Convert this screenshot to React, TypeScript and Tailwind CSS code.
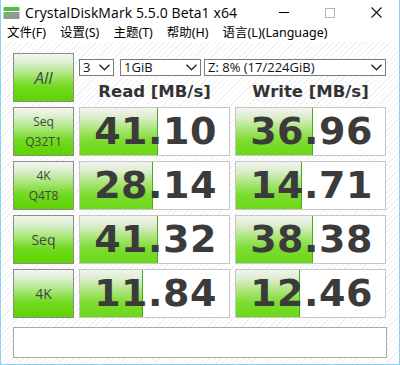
import React from "react";

const rows = [
  { label: ["Seq", "Q32T1"], read: "41.10", write: "36.96" },
  { label: ["4K", "Q4T8"], read: "28.14", write: "14.71" },
  { label: ["Seq"], read: "41.32", write: "38.38" },
  { label: ["4K"], read: "11.84", write: "12.46" },
];

function barWidth(v: string) {
  const n = parseFloat(v);
  return Math.round(63 + 27.8 * Math.log10(n / 11.84));
}

function LabelBtn({ children }: { children: React.ReactNode }) {
  return (
    <div className="h-full border border-[#8c8c8c] bg-[linear-gradient(180deg,#f4f7f2_0%,#dcefcf_18%,#a6e674_45%,#72da22_68%,#5cd400_100%)] flex flex-col items-center justify-center text-[#444] leading-[20px] text-[12px] [font-family:'Open_Sans','DejaVu_Sans',sans-serif]">
      {children}
    </div>
  );
}

function ValueBox({ v }: { v: string }) {
  return (
    <div className="relative h-full border border-[#c6c6c6] bg-white overflow-hidden">
      <div
        className="absolute left-0 top-0 bottom-0 border-r border-[#4aa81a] bg-[linear-gradient(180deg,#f2f4f0_0%,#dcedcc_20%,#a4e46e_48%,#7cdc30_70%,#6cd818_100%)]"
        style={{ width: barWidth(v) }}
      />
      <div className="relative h-full flex items-center justify-center pl-[2px] text-[38px] font-bold text-[#3b3b3b] [font-family:'DejaVu_Sans',sans-serif] tracking-[0.5px]">
        {v}
      </div>
    </div>
  );
}

function Chevron() {
  return (
    <svg width="11" height="7" viewBox="0 0 11 7" className="shrink-0">
      <path d="M0.5 0.8 L5.5 5.8 L10.5 0.8" fill="none" stroke="#222" strokeWidth="1.3" />
    </svg>
  );
}

function Select({ text, w }: { text: string; w: string }) {
  return (
    <div className={`${w} h-[17px] border border-[#7a7a7a] bg-white flex items-center justify-between pl-[3px] pr-[3px] text-[13px] text-[#111] [font-family:'Open_Sans','DejaVu_Sans',sans-serif]`}>
      <span className="leading-none">{text}</span>
      <Chevron />
    </div>
  );
}

export default function App() {
  return (
    <div className="w-[400px] h-[365px] flex flex-col border-x border-b border-[#86d6ea] bg-white overflow-hidden">
      {/* title bar */}
      <div className="h-[25px] flex items-center shrink-0">
        <svg width="17" height="12" viewBox="0 0 17 12" className="ml-[2px] mt-[1px]">
          <rect x="0.5" y="0" width="16" height="4" rx="1" fill="#4cc23a" />
          <rect x="0.5" y="5" width="16" height="7" fill="#8e9a96" />
          <rect x="2" y="7" width="4" height="2" fill="#5bd14a" />
        </svg>
        <span className="ml-[5px] text-[14px] text-black [font-family:'Open_Sans','Noto_Sans',sans-serif] tracking-[0.1px]">
          CrystalDiskMark 5.5.0 Beta1 x64
        </span>
        <div className="ml-auto flex h-full">
          <div className="w-[46px] flex items-center justify-center">
            <div className="w-[10px] h-[1px] bg-black" />
          </div>
          <div className="w-[46px] flex items-center justify-center">
            <div className="w-[10px] h-[10px] border border-[#b4b4b4]" />
          </div>
          <div className="w-[46px] flex items-center justify-center">
            <svg width="11" height="11" viewBox="0 0 11 11">
              <path d="M0.5 0.5 L10.5 10.5 M10.5 0.5 L0.5 10.5" stroke="#111" strokeWidth="1.1" />
            </svg>
          </div>
        </div>
      </div>
      {/* menu */}
      <div className="h-[17px] shrink-0 flex items-center gap-[14px] pl-[6px] text-[12.5px] text-black [font-family:'Noto_Sans','Noto_Sans_CJK_SC',sans-serif]">
        <span>文件(F)</span>
        <span>设置(S)</span>
        <span>主题(T)</span>
        <span>帮助(H)</span>
        <span>语言(L)(Language)</span>
      </div>
      {/* body */}
      <div className="flex-1 px-[12px] pt-[11px] bg-[repeating-linear-gradient(135deg,#ffffff_0px,#ffffff_3px,#f1f1f1_3px,#f1f1f1_4px)]">
        <div className="grid grid-cols-[61px_151px_151px] gap-x-[5px] gap-y-[5px] auto-rows-[49px]">
          <LabelBtn>
            <span className="text-[17px] italic text-[#4a4a4a]">All</span>
          </LabelBtn>
          <div className="col-span-2 flex flex-col">
            <div className="flex mt-[6px]">
              <Select text="3" w="w-[35px]" />
              <div className="w-[6px]" />
              <Select text="1GiB" w="w-[81px]" />
              <div className="w-[3px]" />
              <Select text="Z: 8% (17/224GiB)" w="w-[182px]" />
            </div>
            <div className="flex mt-[6px] text-[16.5px] font-bold text-[#333] [font-family:'DejaVu_Sans',sans-serif] leading-[20px]">
              <div className="w-[151px] text-center">Read [MB/s]</div>
              <div className="w-[5px]" />
              <div className="w-[151px] text-center">Write [MB/s]</div>
            </div>
          </div>
          {rows.map((r, i) => (
            <React.Fragment key={i}>
              <LabelBtn>
                {r.label.map((l, j) => (
                  <span key={j} className={r.label.length === 1 ? "text-[14px]" : ""}>
                    {l}
                  </span>
                ))}
              </LabelBtn>
              <ValueBox v={r.read} />
              <ValueBox v={r.write} />
            </React.Fragment>
          ))}
        </div>
        <div className="mt-[9px] h-[31px] border border-[#a8a8a8] bg-white" />
      </div>
    </div>
  );
}
